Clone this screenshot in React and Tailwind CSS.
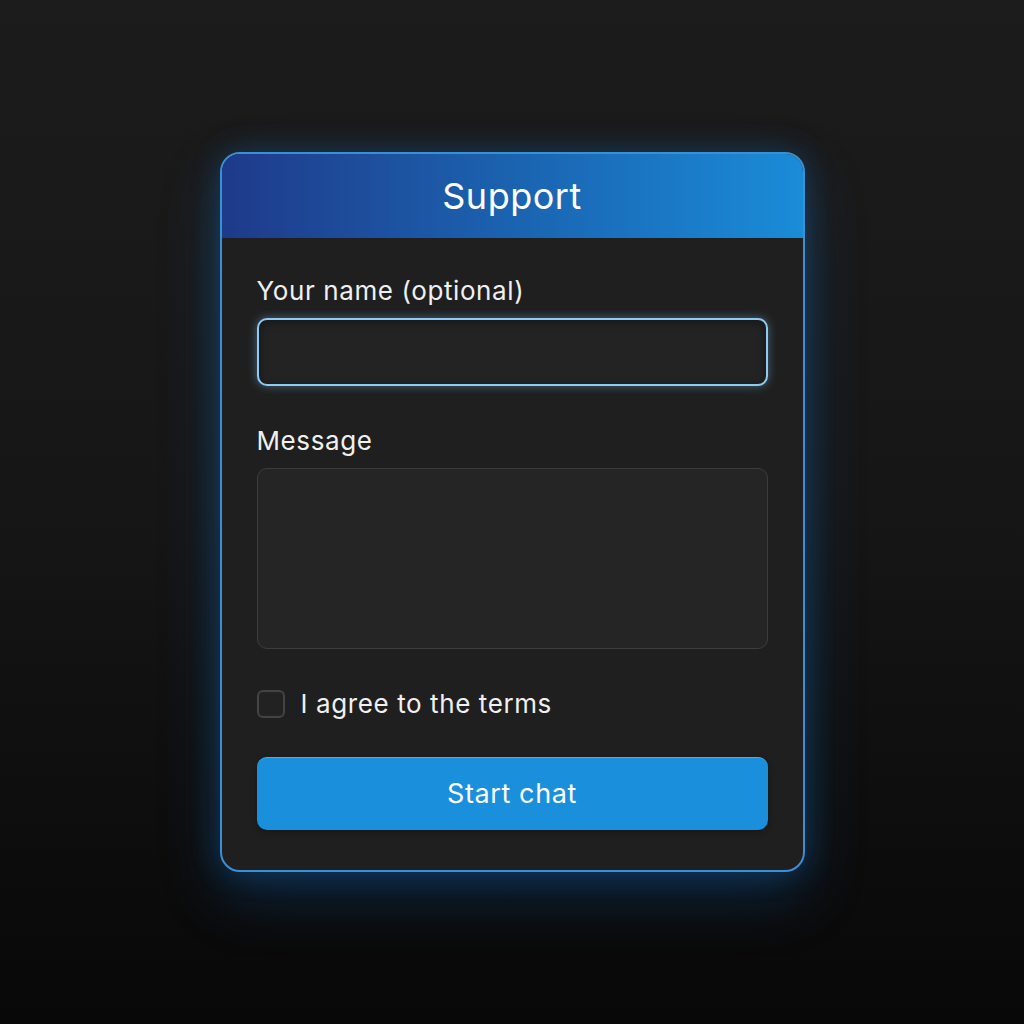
export default function App() {
  return (
    <div
      className="h-screen w-full flex items-center justify-center bg-gradient-to-b from-[#1c1c1c] via-[#161616] to-[#080808]"
      style={{ fontFamily: "Inter, 'Noto Sans', sans-serif" }}
    >
      {/* Card */}
      <div className="w-[585px] h-[720px] rounded-[20px] border-2 border-[#3a90d6] bg-[#1f1f1f] overflow-hidden flex flex-col shadow-[0_0_30px_rgba(30,140,230,0.25),0_24px_60px_rgba(20,120,220,0.25)]">
        <div className="h-[84px] shrink-0 flex items-center justify-center bg-gradient-to-r from-[#1e3a8a] via-[#1a63b0] to-[#1a8cd8]">
          <h1 className="text-[36px] tracking-[0.5px] text-white font-normal">Support</h1>
        </div>

        <div className="flex flex-col px-[35px] pt-[37px]">
          <label className="text-[26px] tracking-[0.6px] leading-[32px] text-[#f0f0f0]">Your name (optional)</label>
          <input
            type="text"
            className="mt-[11px] h-[68px] w-full rounded-[10px] border-2 border-[#8fcaf0] bg-[#232323] px-4 text-white outline-none shadow-[0_0_10px_rgba(120,190,240,0.45),inset_0_2px_8px_rgba(0,0,0,0.4)]"
          />

          <label className="mt-[39px] text-[26px] tracking-[0.6px] leading-[32px] text-[#f0f0f0]">Message</label>
          <textarea className="mt-[11px] h-[181px] w-full resize-none rounded-[10px] border border-[#3d3d3d] bg-[#252525] px-4 py-3 text-white outline-none" />

          <div className="mt-[39px] flex items-center gap-[16px]">
            <div className="h-[28px] w-[28px] rounded-[6px] border-2 border-[#444] bg-[#222]" />
            <span className="text-[26px] tracking-[0.6px] leading-[32px] text-[#f0f0f0]">I agree to the terms</span>
          </div>

          <button className="mt-[37px] h-[73px] w-full rounded-[10px] bg-[#1a8fdb] border-t border-[#4aaeea] text-[27px] tracking-[0.6px] text-white shadow-[0_2px_6px_rgba(0,0,0,0.3)]">
            Start chat
          </button>
        </div>
      </div>
    </div>
  );
}
